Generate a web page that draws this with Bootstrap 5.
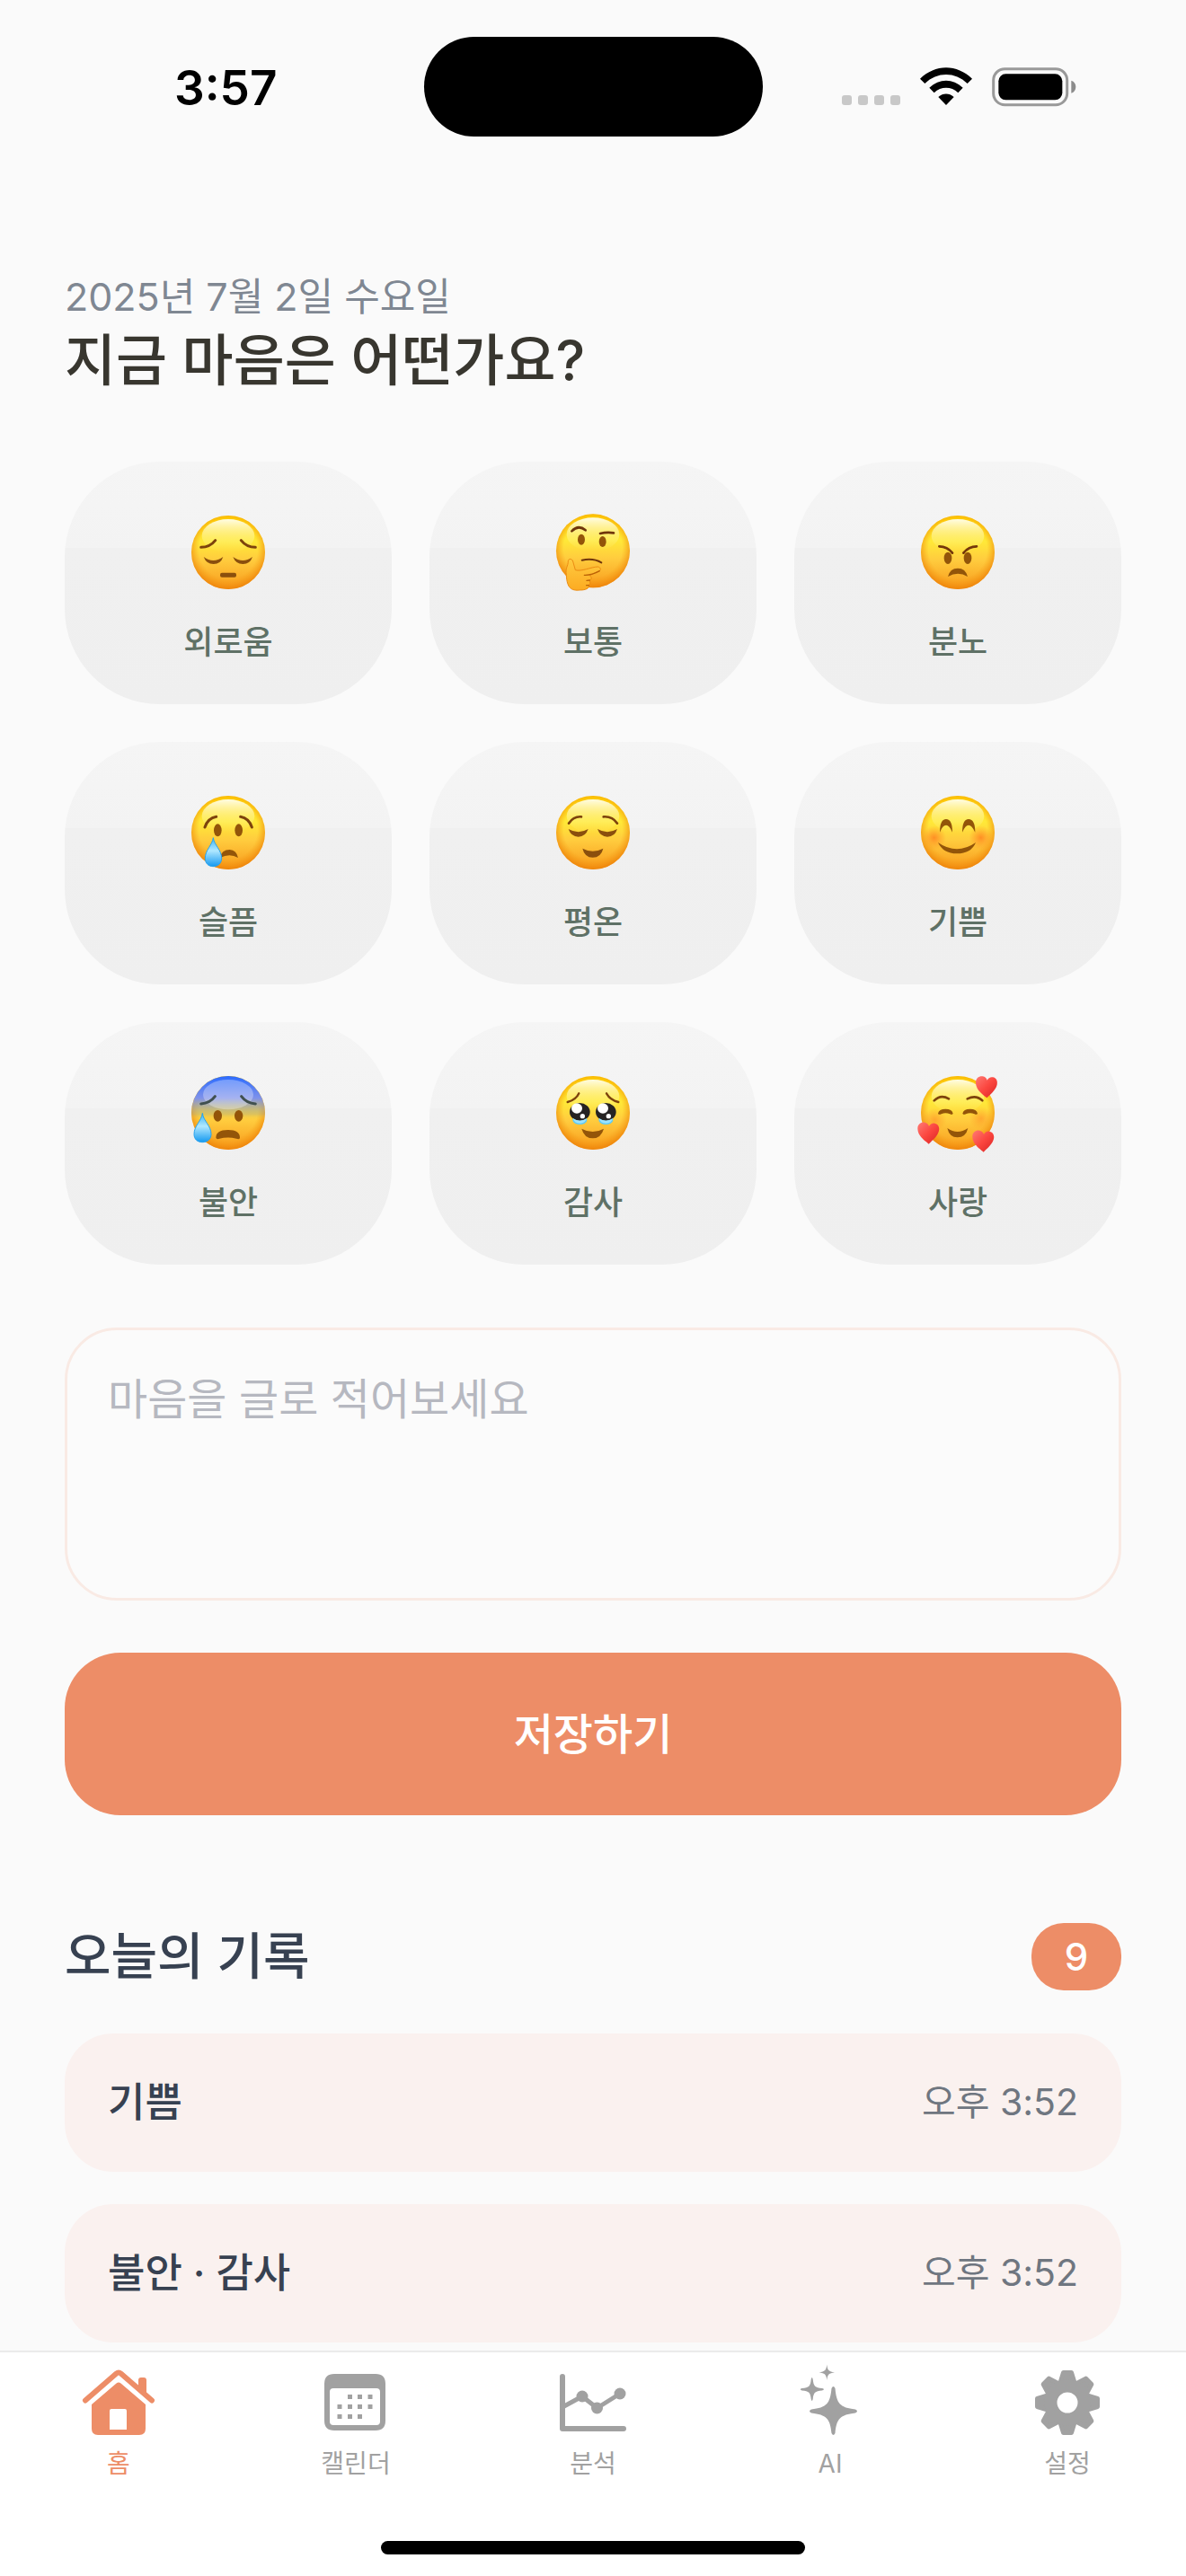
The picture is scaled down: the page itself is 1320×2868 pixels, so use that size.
<!DOCTYPE html>
<html lang="ko">
<head>
<meta charset="utf-8">
<meta name="viewport" content="width=device-width, initial-scale=1">
<title>마음 기록</title>
<link href="https://cdn.jsdelivr.net/npm/bootstrap@5.3.0/dist/css/bootstrap.min.css" rel="stylesheet">
<style>
  :root { --coral: #ed8d67; --ink: #374151; --muted-tab: #a1a1a1; }
  body { background: #fafafa; font-family: Inter, "Noto Sans CJK KR", sans-serif; }
  svg { display: block; overflow: visible; flex: none; }

  .status-bar { padding-top: 41px; }
  .status-side { flex: 1 1 0; min-width: 0; }
  .status-time { font-size: 53px; line-height: 64px; font-weight: 600; color: #000; margin: 2px 0 0 194px; }
  .status-icons { margin-right: 122px; gap: 22px; }
  .island { width: 377px; height: 111px; border-radius: 56px; background: #000; }

  .screen { padding: 148px 72px 9px; }
  .today { font-size: 43px; line-height: 60px; height: 60px; color: #7f8792; }
  .question { font-size: 62px; line-height: 84px; height: 84px; font-weight: 500; color: #38362f; margin-bottom: 70px; }

  .mood-grid { --bs-gutter-x: 42px; --bs-gutter-y: 42px; }
  .mood-tile { height: 270px; padding: 60px 0 0; gap: 32px; border: 0; border-radius: 106px; color: #5f7166;
    font-size: 36px; line-height: 54px; font-weight: 500;
    background: linear-gradient(#f5f5f5, #f3f3f3 96px, #f0f0f0 96px, #efefef); }

  .note-box { height: 304px; margin: 70px 0 58px; padding: 47px 45px; border: 3px solid #f9eae4; border-radius: 58px;
    font-size: 48px; line-height: 60px; background: #fbfbfb; resize: none; }
  .note-box::placeholder { color: #b6b8c0; opacity: 1; }
  .save-btn { height: 181px; border-radius: 62px; background: var(--coral); color: #fff; font-size: 48px; font-weight: 500; margin-bottom: 120px; }

  .section-title { font-size: 56px; line-height: 75px; height: 75px; font-weight: 500; color: var(--ink); }
  .count-pill { width: 100px; height: 75px; border-radius: 36px; background: var(--coral); font-size: 42px; font-weight: 500; }
  .records { margin-top: 48px; gap: 36px; }
  .record { height: 154px; padding: 0 48px; border: 0; border-radius: 54px; background: #faf1ef; color: var(--ink); font-size: 45px; font-weight: 500; }
  .record-time { font-size: 41px; font-weight: 400; color: #6f7680; }

  .tab-bar { background: #fff; border-top: 2px solid #ebebeb; padding: 12px 0 24px; }
  .tab-item { flex: 1 1 0; gap: 10px; font-size: 28px; line-height: 36px; color: var(--muted-tab); }
  .tab-item span { height: 36px; }
  .tab-item.active { color: var(--coral); }
  .home-bar { width: 472px; height: 15px; border-radius: 8px; background: #000; margin-top: 68px; }
</style>
<script src="https://cdn.jsdelivr.net/npm/bootstrap@5.3.0/dist/js/bootstrap.bundle.min.js"></script>
</head>
<body class="d-flex flex-column min-vh-100">

<!-- Shared gradients and face parts -->
<svg width="0" height="0" class="position-absolute" aria-hidden="true">
  <defs>
    <linearGradient id="skin" x1="0" y1="0" x2="0" y2="1">
      <stop offset="0" stop-color="#ffd000"/><stop offset=".35" stop-color="#ffe938"/><stop offset=".6" stop-color="#ffcc3e"/><stop offset="1" stop-color="#f89a1c"/>
    </linearGradient>
    <radialGradient id="rim" cx=".5" cy=".46" r=".55">
      <stop offset=".72" stop-color="#f59a10" stop-opacity="0"/><stop offset="1" stop-color="#ec7f08" stop-opacity=".9"/>
    </radialGradient>
    <linearGradient id="gloss" x1="0" y1="0" x2="0" y2="1">
      <stop offset="0" stop-color="#fffff0" stop-opacity=".95"/><stop offset="1" stop-color="#fff27a" stop-opacity="0"/>
    </linearGradient>
    <linearGradient id="chill" x1="0" y1="0" x2="0" y2="1">
      <stop offset="0" stop-color="#2b6bff"/><stop offset=".3" stop-color="#7f92ea"/><stop offset=".52" stop-color="#a9a58c" stop-opacity=".4"/><stop offset=".6" stop-color="#ffd43f" stop-opacity="0"/>
    </linearGradient>
    <linearGradient id="tear" x1="0" y1="0" x2="0" y2="1">
      <stop offset="0" stop-color="#39b4f5"/><stop offset=".45" stop-color="#b0e8ff"/><stop offset="1" stop-color="#1499f0"/>
    </linearGradient>
    <radialGradient id="blush"><stop offset="0" stop-color="#ff7f1e" stop-opacity=".8"/><stop offset="1" stop-color="#ff8f1e" stop-opacity="0"/></radialGradient>
    <linearGradient id="heartfill" x1="0" y1="0" x2="1" y2="1">
      <stop offset="0" stop-color="#ff7a74"/><stop offset=".5" stop-color="#fb463f"/><stop offset="1" stop-color="#d92424"/>
    </linearGradient>
    <linearGradient id="handfill" x1="0" y1="0" x2="0" y2="1">
      <stop offset="0" stop-color="#ffcb40"/><stop offset="1" stop-color="#fcab22"/>
    </linearGradient>
    <g id="head">
      <circle cx="123" cy="123" r="123" fill="url(#skin)"/>
      <circle cx="123" cy="123" r="123" fill="url(#rim)"/>
      <ellipse cx="123" cy="68" rx="88" ry="56" fill="url(#gloss)"/>
    </g>
    <path id="heart" d="M38 74C30 66 2 50 1 24C0 7 14 0 24 2C32 3 37 9 39 15C43 8 50 3 58 5C69 7 75 17 72 30C67 50 48 63 38 74Z" fill="url(#heartfill)"/>
  </defs>
</svg>

<header class="status-bar d-flex align-items-center">
  <div class="status-side"><div class="status-time">3:57</div></div>
  <div class="island"></div>
  <div class="status-side">
    <div class="status-icons d-flex justify-content-end">
      <svg width="65" height="44" viewBox="0 0 65 44" fill="#c8c8c8" role="img" aria-label="신호 없음">
        <rect x="0" y="31" width="11" height="11" rx="3"/><rect x="18" y="31" width="11" height="11" rx="3"/><rect x="36" y="31" width="11" height="11" rx="3"/><rect x="54" y="31" width="11" height="11" rx="3"/>
      </svg>
      <svg width="58" height="44" viewBox="0 0 174 132" role="img" aria-label="와이파이">
        <path d="M0 38C50-12 124-12 174 38L158 54C117 14 57 14 16 54Z"/>
        <path d="M31 68C64 36 110 36 143 68L127 85C104 63 70 63 47 85Z"/>
        <path d="M61 99C77 85 97 85 113 99L87 126Z"/>
      </svg>
      <svg width="94" height="44" viewBox="0 0 282 132" role="img" aria-label="배터리">
        <rect x="5" y="5" width="246" height="120" rx="38" fill="none" stroke="#999" stroke-width="9"/>
        <rect x="22" y="22" width="213" height="87" rx="24"/>
        <path d="M265 44C285 50 285 80 265 86Z" fill="#8c8c8c"/>
      </svg>
    </div>
  </div>
</header>

<main class="screen">
  <div class="today">2025년 7월 2일 수요일</div>
  <h1 class="question">지금 마음은 어떤가요?</h1>

  <div class="row row-cols-3 mood-grid">
    <div class="col"><button type="button" class="btn mood-tile w-100 d-flex flex-column align-items-center">
      <svg width="82" height="82" viewBox="0 0 246 246" aria-hidden="true"><use href="#head"/>
        <g fill="none" stroke="#7d430c" stroke-width="9" stroke-linecap="round"><path d="M32 106Q62 106 80 83M214 106Q184 106 166 83"/></g>
        <g fill="#8a4f0d"><path d="M41 138Q73 162 106 138Q98 162 74 162Q50 162 41 138ZM139 138Q172 162 204 138Q196 162 172 162Q148 162 139 138Z"/><rect x="96" y="191" width="54" height="15" rx="6"/></g>
      </svg><span>외로움</span></button></div>
    <div class="col"><button type="button" class="btn mood-tile w-100 d-flex flex-column align-items-center">
      <svg width="82" height="82" viewBox="0 5 246 246" aria-hidden="true"><use href="#head"/>
        <g fill="none" stroke="#6f350b" stroke-width="8" stroke-linecap="round"><path d="M52 57Q74 34 98 54M147 65Q168 60 192 63"/><path d="M86 154Q124 146 151 162" stroke-width="6"/></g>
        <ellipse cx="84" cy="85" rx="12" ry="18" fill="#935509"/><ellipse cx="155" cy="92" rx="12" ry="18" fill="#935509"/>
        <path d="M34 204C30 178 40 176 40 157C42 147 53 149 56 158L64 187C84 193 116 177 139 176C151 178 151 190 139 192L112 205C121 212 118 219 111 222C116 230 112 234 109 238C112 248 98 254 80 254C50 257 36 247 34 204Z" fill="url(#handfill)" stroke="#ec8b12" stroke-width="3"/>
        <path d="M94 204Q118 205 145 190M102 222L112 221M101 238L109 238" fill="none" stroke="#bb6207" stroke-width="4" stroke-linecap="round"/>
      </svg><span>보통</span></button></div>
    <div class="col"><button type="button" class="btn mood-tile w-100 d-flex flex-column align-items-center">
      <svg width="82" height="82" viewBox="0 0 246 246" aria-hidden="true"><use href="#head"/>
        <g fill="none" stroke="#74370a" stroke-width="8" stroke-linecap="round"><path d="M61 103Q88 103 105 125M186 103Q159 103 142 125"/></g>
        <g fill="#935509"><ellipse cx="90" cy="142" rx="13" ry="20"/><ellipse cx="156" cy="142" rx="13" ry="20"/><path d="M90 204Q97 176 123 176Q149 176 156 204Q124 184 90 204Z"/></g>
      </svg><span>분노</span></button></div>

    <div class="col"><button type="button" class="btn mood-tile w-100 d-flex flex-column align-items-center">
      <svg width="82" height="82" viewBox="0 0 246 246" aria-hidden="true"><use href="#head"/>
        <g fill="none" stroke="#7d430c" stroke-width="9" stroke-linecap="round"><path d="M45 105Q55 75 83 70M202 105Q192 75 164 70"/></g>
        <g fill="#935509"><ellipse cx="88" cy="115" rx="13" ry="21"/><ellipse cx="158" cy="115" rx="13" ry="21"/><path d="M96 207Q100 180 128 180Q151 182 156 207Q128 190 96 207Z"/></g>
        <path d="M73 140C76 164 101 182 101 208C101 226 89 236 73 236C57 236 46 226 46 208C46 182 70 164 73 140Z" fill="url(#tear)" stroke="#27a2ee" stroke-width="3"/>
      </svg><span>슬픔</span></button></div>
    <div class="col"><button type="button" class="btn mood-tile w-100 d-flex flex-column align-items-center">
      <svg width="82" height="82" viewBox="0 0 246 246" aria-hidden="true"><use href="#head"/>
        <g fill="none" stroke="#7d430c" stroke-width="8" stroke-linecap="round"><path d="M42 92Q58 68 84 70M204 92Q188 68 158 70"/></g>
        <g fill="#8a4f0d"><path d="M41 111Q74 130 107 111Q98 137 74 137Q50 137 41 111ZM138 111Q171 130 204 111Q196 137 171 137Q147 137 138 111Z"/><path d="M88 176Q122 194 157 176Q150 206 122 206Q95 206 88 176Z"/></g>
      </svg><span>평온</span></button></div>
    <div class="col"><button type="button" class="btn mood-tile w-100 d-flex flex-column align-items-center">
      <svg width="82" height="82" viewBox="0 0 246 246" aria-hidden="true"><use href="#head"/>
        <circle cx="44" cy="140" r="40" fill="url(#blush)"/><circle cx="200" cy="140" r="40" fill="url(#blush)"/>
        <g fill="#935509"><path d="M63 122Q63 78 84 78Q105 78 105 122Q95 98 84 98Q72 98 63 122ZM138 122Q138 78 159 78Q181 78 181 122Q170 98 159 98Q148 98 138 122Z"/><path d="M57 156Q120 200 183 156Q168 193 120 193Q74 193 57 156Z"/></g>
      </svg><span>기쁨</span></button></div>

    <div class="col"><button type="button" class="btn mood-tile w-100 d-flex flex-column align-items-center">
      <svg width="82" height="82" viewBox="0 0 246 246" aria-hidden="true"><use href="#head"/>
        <circle cx="123" cy="123" r="123" fill="url(#chill)"/><ellipse cx="123" cy="62" rx="84" ry="50" fill="#fff" opacity=".3"/>
        <g fill="none" stroke="#40504f" stroke-width="9" stroke-linecap="round"><path d="M32 93Q62 91 79 68M214 93Q184 91 167 68"/></g>
        <g fill="#935509"><ellipse cx="88" cy="133" rx="14" ry="19"/><ellipse cx="158" cy="133" rx="14" ry="19"/><path d="M82 206Q82 180 122 180Q162 180 162 206Q162 213 150 209Q122 202 94 209Q84 213 82 206Z"/></g>
        <path d="M37 124C40 150 66 166 66 194C66 212 53 221 37 221C21 221 9 212 9 194C9 166 34 150 37 124Z" fill="url(#tear)" stroke="#27a2ee" stroke-width="3"/>
      </svg><span>불안</span></button></div>
    <div class="col"><button type="button" class="btn mood-tile w-100 d-flex flex-column align-items-center">
      <svg width="82" height="82" viewBox="0 0 246 246" aria-hidden="true"><use href="#head"/>
        <g fill="none" stroke="#7d430c" stroke-width="7" stroke-linecap="round"><path d="M38 87Q66 80 76 58M208 87Q180 80 168 58"/></g>
        <g fill="#5fcaf5"><ellipse cx="79" cy="146" rx="24" ry="16"/><ellipse cx="166" cy="146" rx="24" ry="16"/></g>
        <g fill="#262323"><ellipse cx="79" cy="120" rx="34" ry="30"/><ellipse cx="166" cy="120" rx="34" ry="30"/></g>
        <path d="M56 141Q79 156 102 141Q98 158 79 158Q60 158 56 141ZM143 141Q166 156 189 141Q185 158 166 158Q147 158 143 141Z" fill="#9ce4ff"/>
        <g fill="#fff"><ellipse cx="69" cy="108" rx="18" ry="17"/><ellipse cx="156" cy="108" rx="18" ry="17"/><circle cx="88" cy="134" r="8"/><circle cx="175" cy="134" r="8"/></g>
        <path d="M85 176Q122 196 159 176Q150 208 122 208Q94 208 85 176Z" fill="#935509"/>
      </svg><span>감사</span></button></div>
    <div class="col"><button type="button" class="btn mood-tile w-100 d-flex flex-column align-items-center">
      <svg width="82" height="82" viewBox="0 0 246 246" aria-hidden="true"><use href="#head"/>
        <circle cx="46" cy="146" r="40" fill="url(#blush)" opacity=".6"/><circle cx="200" cy="142" r="40" fill="url(#blush)" opacity=".6"/>
        <g fill="none" stroke="#7d430c" stroke-width="8" stroke-linecap="round"><path d="M44 82Q66 60 93 76M155 76Q184 62 205 82"/></g>
        <g fill="#935509"><path d="M57 125Q60 110 82 110Q104 110 107 125Q104 131 97 127Q82 121 68 127Q60 131 57 125ZM139 125Q142 110 164 110Q186 110 189 125Q186 131 179 127Q164 121 150 127Q142 131 139 125Z"/><path d="M88 174Q122 198 157 174Q150 205 122 205Q95 205 88 174Z"/></g>
        <use href="#heart" x="182" y="-1"/><use href="#heart" x="-12" y="153"/><use href="#heart" x="171" y="180"/>
      </svg><span>사랑</span></button></div>
  </div>

  <textarea class="form-control note-box" aria-label="마음을 글로 적어보세요" placeholder="마음을 글로 적어보세요"></textarea>
  <button type="button" class="btn save-btn w-100">저장하기</button>

  <div class="d-flex justify-content-between align-items-center">
    <h2 class="section-title m-0">오늘의 기록</h2>
    <span class="count-pill d-flex align-items-center justify-content-center text-white">9</span>
  </div>
  <ul class="records list-unstyled d-flex flex-column mb-0">
    <li class="record d-flex justify-content-between align-items-center"><span>기쁨</span><time class="record-time" datetime="15:52">오후 3:52</time></li>
    <li class="record d-flex justify-content-between align-items-center"><span>불안 · 감사</span><time class="record-time" datetime="15:52">오후 3:52</time></li>
  </ul>
</main>

<nav class="tab-bar mt-auto" aria-label="주 메뉴">
  <div class="d-flex">
    <a href="#" class="tab-item active d-flex flex-column align-items-center text-decoration-none" aria-current="page">
      <svg width="84" height="84" viewBox="0 0 84 84" fill="currentColor" aria-hidden="true">
        <path d="M64 30V19Q64 16 67 16H70Q73 16 73 19V38Z"/>
        <path d="M5 41.500L39.500 11.500Q42 9.500 44.500 11.500L79 41.500" fill="none" stroke="currentColor" stroke-width="6" stroke-linecap="round"/>
        <path fill-rule="evenodd" d="M12 46L39.500 22.500Q42 20.500 44.500 22.500L72 46V73Q72 80 65 80H19Q12 80 12 73ZM34 51Q32 51 32 53V74H51V53Q51 51 49 51Z"/>
      </svg><span>홈</span></a>
    <a href="#" class="tab-item d-flex flex-column align-items-center text-decoration-none">
      <svg width="84" height="84" viewBox="0 0 84 84" fill="currentColor" aria-hidden="true">
        <path fill-rule="evenodd" d="M18 12H64Q75 12 75 23V64Q75 75 64 75H18Q7 75 7 64V23Q7 12 18 12ZM17 28Q13 28 13 32V65Q13 69 17 69H65Q69 69 69 65V32Q69 28 65 28Z"/>
        <path d="M33 37.500h5M44 37.500h5M55.500 37.500h5M21.500 48.500h5M33 48.500h5M44 48.500h5M55.500 48.500h5M21.500 59.500h5M33 59.500h5M44 59.500h5" stroke="currentColor" stroke-width="5"/>
      </svg><span>캘린더</span></a>
    <a href="#" class="tab-item d-flex flex-column align-items-center text-decoration-none">
      <svg width="84" height="84" viewBox="0 0 84 84" fill="none" stroke="currentColor" stroke-linecap="round" stroke-linejoin="round" aria-hidden="true">
        <path d="M8 15V73H76" stroke-width="6"/><path d="M8 49L30 37L46.500 50L72 34" stroke-width="5"/>
        <g fill="currentColor" stroke="none"><circle cx="30" cy="37" r="6.500"/><circle cx="46.500" cy="50" r="6.500"/><circle cx="72" cy="34" r="6.500"/></g>
      </svg><span>분석</span></a>
    <a href="#" class="tab-item d-flex flex-column align-items-center text-decoration-none">
      <svg width="84" height="84" viewBox="0 0 84 84" fill="currentColor" aria-hidden="true">
        <path d="M43.500 28Q45.500 24 47.500 28C49 45 53 49.500 70 51.500Q74 53.500 70 55.500C53 57.500 49 62 47.500 78Q45.500 82 43.500 78C42 62 38 57.500 21 55.500Q17 53.500 21 51.500C38 49.500 42 45 43.500 28Z"/>
        <path d="M20.700 18Q21.700 14 22.700 18C23.500 25.500 25 27.500 33 28Q37 29 33 30.500C25 31 23.500 33 22.700 40Q21.700 44 20.700 40C20 33 18.500 31 10.500 30.500Q7 29 10.500 28C18.500 27.500 20 25.500 20.700 18Z"/>
        <path d="M38.300 1.500C39 8 40.500 9.300 47 10.300C40.500 11.300 39 12.600 38.300 19C37.600 12.600 36.100 11.300 29.600 10.300C36.100 9.300 37.600 8 38.300 1.500Z"/>
      </svg><span>AI</span></a>
    <a href="#" class="tab-item d-flex flex-column align-items-center text-decoration-none">
      <svg width="84" height="84" viewBox="0 0 84 84" aria-hidden="true">
        <g transform="translate(42 44)" fill="currentColor" stroke="currentColor" stroke-width="5" stroke-linejoin="round">
          <path id="tooth" d="M-8 -22L-4.500 -33.500H4.500L8 -22Z"/>
          <use href="#tooth" transform="rotate(45)"/><use href="#tooth" transform="rotate(90)"/><use href="#tooth" transform="rotate(135)"/><use href="#tooth" transform="rotate(180)"/><use href="#tooth" transform="rotate(225)"/><use href="#tooth" transform="rotate(270)"/><use href="#tooth" transform="rotate(315)"/>
          <circle r="18.500" fill="none" stroke-width="14"/>
        </g>
      </svg><span>설정</span></a>
  </div>
  <div class="home-bar mx-auto"></div>
</nav>
</body>
</html>
